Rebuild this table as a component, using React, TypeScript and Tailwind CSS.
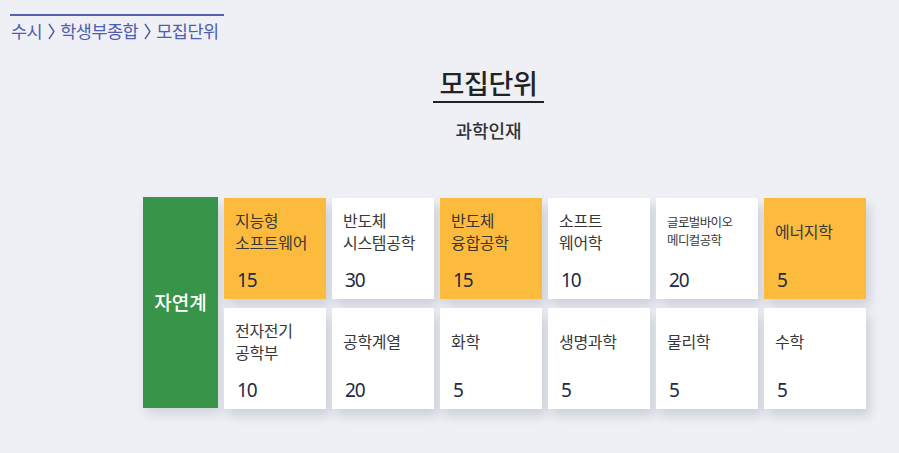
import React from "react";

type Cell = { name: string[]; count: number; hot?: boolean; small?: boolean };

const rows: Cell[][] = [
  [
    { name: ["지능형", "소프트웨어"], count: 15, hot: true },
    { name: ["반도체", "시스템공학"], count: 30 },
    { name: ["반도체", "융합공학"], count: 15, hot: true },
    { name: ["소프트", "웨어학"], count: 10 },
    { name: ["글로벌바이오", "메디컬공학"], count: 20, small: true },
    { name: ["에너지학"], count: 5, hot: true },
  ],
  [
    { name: ["전자전기", "공학부"], count: 10 },
    { name: ["공학계열"], count: 20 },
    { name: ["화학"], count: 5 },
    { name: ["생명과학"], count: 5 },
    { name: ["물리학"], count: 5 },
    { name: ["수학"], count: 5 },
  ],
];

const kr = "font-['Noto_Sans_CJK_KR','Noto_Sans',sans-serif]";

const MajorCell = ({ name, count, hot, small }: Cell) => (
  <div
    className={`w-[102px] h-[101px] flex flex-col shadow-[4px_7px_10px_rgba(40,45,70,0.16)] ${
      hot ? "bg-[#fdbb3e]" : "bg-white"
    }`}
  >
    <div
      className={`h-[48px] mt-[9px] pl-[11px] flex flex-col justify-center text-[#383838] ${
        small
          ? "text-[12.5px] leading-[18px] tracking-[-0.6px]"
          : "text-[16px] leading-[22px] tracking-[-0.3px]"
      }`}
    >
      {name.map((line) => (
        <span key={line}>{line}</span>
      ))}
    </div>
    <div className="mt-[14px] pl-[13px] text-[19px] leading-[22px] text-[#222a44] font-['Noto_Sans',sans-serif] tracking-[-1px]">
      {count}
    </div>
  </div>
);

const Chevron = () => (
  <svg viewBox="0 0 7 17" className="w-[7px] h-[17px] ml-[6px] mr-[5px] mt-[1px] shrink-0">
    <polyline points="1,1 6,8.5 1,16" fill="none" stroke="currentColor" strokeWidth="1.4" />
  </svg>
);

export default function App() {
  return (
    <div className={`w-[899px] h-[453px] bg-[#eef0f6] overflow-hidden ${kr}`}>
      {/* Breadcrumb */}
      <div className="pt-[14px] pl-[10px]">
        <div className="w-[214px] border-t-2 border-[#5461b3] pt-[3px] pl-[1px] flex items-center text-[17.5px] leading-[24px] text-[#4f5cb0] tracking-[-0.5px] whitespace-nowrap">
          <span>수시</span>
          <Chevron />
          <span>학생부종합</span>
          <Chevron />
          <span>모집단위</span>
        </div>
      </div>

      {/* Title */}
      <div className="flex flex-col items-center pl-[78px] mt-[23px]">
        <div className="text-[27px] leading-[34px] font-medium text-[#222] tracking-[-0.3px] border-b-[2.5px] border-[#222] px-[6px] pb-[1px]">
          모집단위
        </div>
        <div className="mt-[15px] text-[18px] leading-[24px] font-medium text-[#333]">
          과학인재
        </div>
      </div>

      {/* Table */}
      <div className="flex gap-[6px] ml-[143px] mt-[55px]">
        <div className="w-[75px] h-[211px] bg-[#389449] flex items-center justify-center text-white text-[19px] font-medium shadow-[3px_6px_10px_rgba(40,45,70,0.14)]">
          자연계
        </div>
        <div className="flex flex-col gap-[9px] pt-[1px]">
          {rows.map((row, i) => (
            <div key={i} className="flex gap-[6px]">
              {row.map((c) => (
                <MajorCell key={c.name.join("")} {...c} />
              ))}
            </div>
          ))}
        </div>
      </div>
    </div>
  );
}
